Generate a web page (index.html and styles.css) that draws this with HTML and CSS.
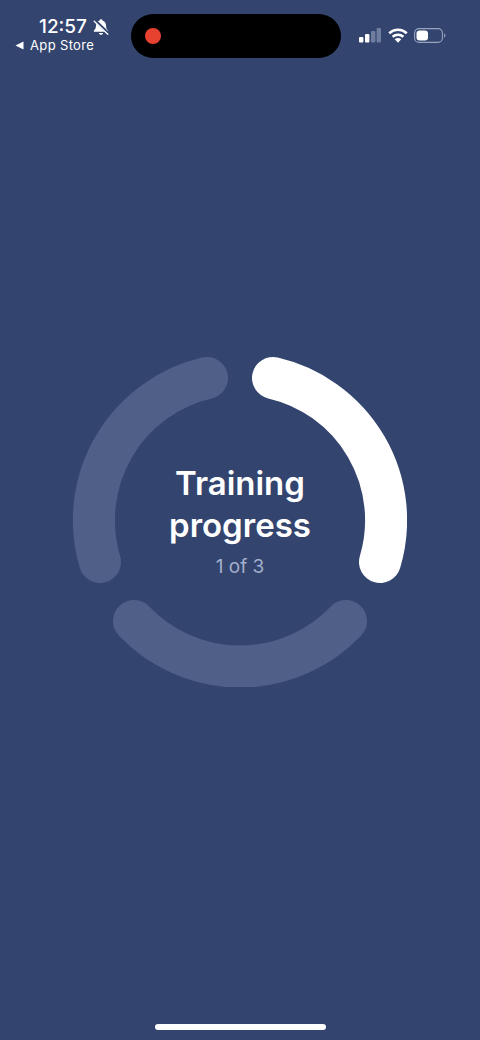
FILE: index.html
```html
<!DOCTYPE html>
<html lang="en">
<head>
<meta charset="utf-8">
<title>Training progress</title>
<link rel="stylesheet" href="styles.css">
</head>
<body>
<div class="screen">
  <header class="status">
    <div class="status-left">
      <div class="time-row">
        <span class="time">12:57</span>
        <svg class="bell" viewBox="0 0 18 18" width="18" height="18" aria-hidden="true">
          <path fill="#fff" d="M9 1.2c.8 0 1.3.5 1.4 1.2 2.2.6 3.5 2.4 3.6 4.8.1 2.6.6 4 2 5.3.5.5.2 1.3-.5 1.3H2.5c-.7 0-1-.8-.5-1.3 1.4-1.3 1.9-2.7 2-5.3.1-2.4 1.4-4.2 3.6-4.8.1-.7.6-1.2 1.4-1.2zM7 15h4c0 1-.9 1.8-2 1.8S7 16 7 15z"/>
          <path stroke="#33456f" stroke-width="3" d="M2.5 2.2l14 13.5"/>
          <path stroke="#fff" stroke-width="1.3" stroke-linecap="round" d="M2.2 3.2l13.6 13"/>
        </svg>
      </div>
      <div class="back-row">
        <svg class="back-arrow" viewBox="0 0 9 9" width="9" height="9" aria-hidden="true"><path fill="#fff" d="M0.5 4.5L8.5 0.5v8z"/></svg>
        <span class="back-label">App Store</span>
      </div>
    </div>
    <div class="island"><span class="rec"></span></div>
    <div class="status-right">
      <svg class="signal" viewBox="0 0 24 15" width="24" height="15" aria-hidden="true">
        <rect x="1" y="9" width="4.4" height="5.4" rx="1" fill="#fff"/>
        <rect x="7" y="6" width="4.4" height="8.4" rx="1" fill="#fff"/>
        <rect x="13" y="3" width="4.4" height="11.4" rx="1" fill="#6f7d9e"/>
        <rect x="18.6" y="0" width="4.4" height="14.4" rx="1" fill="#6f7d9e"/>
      </svg>
      <svg class="wifi" viewBox="0 0 20 15" width="20" height="15" aria-hidden="true">
        <path fill="none" stroke="#fff" stroke-width="2.6" d="M1.2 5.2C6.2.6 13.8.6 18.8 5.2"/>
        <path fill="none" stroke="#fff" stroke-width="2.6" d="M4.6 8.8c3.1-2.7 7.7-2.7 10.8 0"/>
        <path fill="#fff" d="M6.7 11.2c2-1.5 4.6-1.5 6.6 0L10 14.8z"/>
      </svg>
      <svg class="battery" viewBox="0 0 32 15" width="32" height="15" aria-hidden="true">
        <rect x="0.6" y="0.6" width="27.8" height="13.8" rx="4.4" fill="none" stroke="#98a3bd" stroke-width="1.1"/>
        <rect x="2.5" y="2.5" width="11.5" height="10" rx="3" fill="#fff"/>
        <path d="M30 5.4c1 .3 1.5 1.1 1.5 2.1s-.5 1.8-1.5 2.1z" fill="#8a96b3"/>
      </svg>
    </div>
  </header>

  <main class="content">
    <div class="progress">
      <svg class="ring" viewBox="0 0 334 334" width="334" height="334" role="img" aria-label="Step 1 of 3">
        <g fill="none" stroke-width="42" stroke-linecap="round">
          <path class="seg-idle" d="M134 25A146 146 0 0 0 27 209"/>
          <path class="seg-idle" d="M61 268A146 146 0 0 0 273 268"/>
          <path class="seg-done" d="M200 25A146 146 0 0 1 307 209"/>
        </g>
      </svg>
      <div class="label">
        <h1 class="title">Training<br>progress</h1>
        <p class="step">1 of 3</p>
      </div>
    </div>
  </main>

  <footer class="home-bar"><span class="home-indicator"></span></footer>
</div>
</body>
</html>
```

FILE: styles.css
```css
* { box-sizing: border-box; }

html, body {
  margin: 0;
  padding: 0;
}

body {
  background: #33456f;
  color: #fff;
  font-family: Inter, "Liberation Sans", sans-serif;
}

.screen {
  width: 480px;
  height: 1040px;
  display: flex;
  flex-direction: column;
  overflow: hidden;
}

.status {
  display: flex;
  align-items: flex-start;
  padding: 14px 34px 0 15px;
  height: 58px;
  flex: none;
}

.status-left {
  width: 116px;
  display: flex;
  flex-direction: column;
  flex: none;
  margin-top: 2px;
}

.time-row {
  display: flex;
  align-items: center;
  height: 21px;
  padding-left: 24px;
  gap: 5px;
}

.time {
  font-size: 19px;
  font-weight: 500;
  line-height: 21px;
}

.bell { flex: none; }

.back-row {
  display: flex;
  align-items: center;
  gap: 6px;
  height: 16px;
}

.back-arrow { flex: none; }

.back-label {
  font-size: 13px;
  font-weight: 400;
  line-height: 16px;
  letter-spacing: 0.35px;
}

.island {
  width: 210px;
  height: 44px;
  border-radius: 22px;
  background: #000;
  flex: none;
  display: flex;
  align-items: center;
  padding-left: 14px;
}

.rec {
  width: 16px;
  height: 16px;
  border-radius: 50%;
  background: #e8412f;
}

.status-right {
  display: flex;
  align-items: center;
  flex: none;
  margin-left: 17px;
  margin-top: 14px;
  gap: 6px;
}

.status-right svg { display: block; flex: none; }

.content {
  flex: 1;
  display: flex;
  justify-content: center;
  padding-top: 295px;
}

.progress {
  display: grid;
  width: 334px;
  height: 334px;
  place-items: center;
}

.ring,
.label {
  grid-area: 1 / 1;
}

.ring { display: block; }

.seg-idle { stroke: #505f87; }
.seg-done { stroke: #fff; }

.label { text-align: center; }

.title {
  margin: 0;
  font-size: 33px;
  font-weight: 600;
  line-height: 42px;
}

.step {
  margin: 9px 0 0;
  font-size: 19px;
  font-weight: 400;
  line-height: 24px;
  color: #a3afcc;
}

.home-bar {
  flex: none;
  height: 16px;
  display: flex;
  justify-content: center;
  padding-left: 1px;
}

.home-indicator {
  width: 171px;
  height: 6px;
  border-radius: 3px;
  background: #fff;
}
```
